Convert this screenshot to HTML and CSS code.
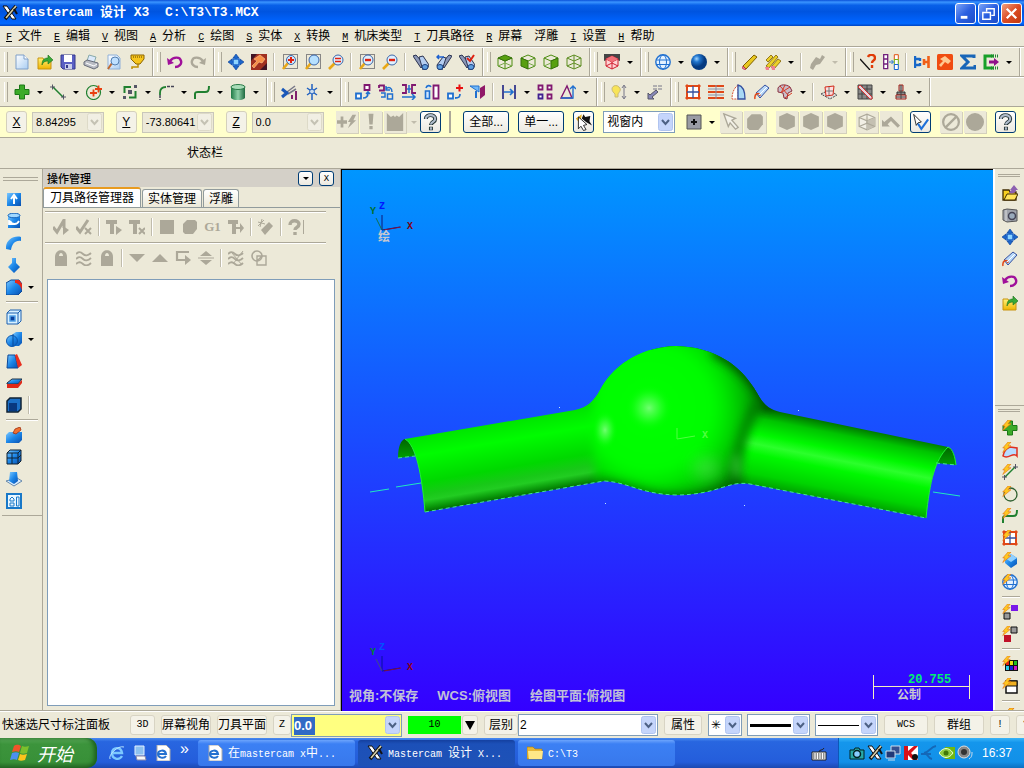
FILE: index.html
```html
<!DOCTYPE html>
<html lang="zh-CN">
<head>
<meta charset="utf-8">
<title>Mastercam 设计 X3</title>
<link rel="stylesheet" href="styles.css">
</head>
<body>
<svg class="sprite" aria-hidden="true">
<defs>
<linearGradient id="gy" x2="0" y2="1"><stop stop-color="#fff27a"/><stop offset="1" stop-color="#f0b400"/></linearGradient>
<linearGradient id="gb" x2="1" y2="1"><stop stop-color="#7cc8ff"/><stop offset=".5" stop-color="#1b86e8"/><stop offset="1" stop-color="#0a4fae"/></linearGradient>
<linearGradient id="gg"><stop stop-color="#1f7a45"/><stop offset=".5" stop-color="#8fd0a8"/><stop offset="1" stop-color="#1f6a40"/></linearGradient>
<linearGradient id="gp" x2="1" y2="1"><stop stop-color="#fff"/><stop offset="1" stop-color="#a9cdf2"/></linearGradient>
<radialGradient id="gs" cx=".35" cy=".3"><stop stop-color="#9fd4ff"/><stop offset=".4" stop-color="#2277cf"/><stop offset="1" stop-color="#053a80"/></radialGradient>
</defs>
<symbol id="new" viewBox="0 0 16 16"><path d="M2 1h8l4 4v10H2z" fill="url(#gp)" stroke="#7f9fc8"/><path d="M10 1v4h4" fill="#fff" stroke="#7f9fc8"/></symbol>
<symbol id="open" viewBox="0 0 16 16"><path d="M1 4h5l1 2h7v9H1z" fill="url(#gy)" stroke="#c89410"/><path d="M5 11c0-5 2-7 6-7V1l5 5-5 4V7c-3 0-5 1-6 4z" fill="#37a837" stroke="#1b6e1b" stroke-width=".6"/></symbol>
<symbol id="save" viewBox="0 0 16 16"><path d="M1 1h14v14H3l-2-2z" fill="#5a5fc4" stroke="#34388c"/><path d="M4 1h8v7H4z" fill="#fff"/><path d="M5 10h7v5H5z" fill="#c9cdea"/><path d="M6 11h2v3H6z" fill="#34388c"/></symbol>
<symbol id="print" viewBox="0 0 16 16"><path d="M6 1l7 2-2 6-7-2z" fill="#dbe9fb" stroke="#8aa"/><path d="M1 8l3-2 11 3v4l-4 2-10-4z" fill="#b9bcc4" stroke="#666b78"/><path d="M3 9l8 3 3-2" fill="none" stroke="#fff"/></symbol>
<symbol id="preview" viewBox="0 0 16 16"><path d="M2 1h9l3 3v11H2z" fill="url(#gp)" stroke="#8fb0d8"/><path d="M6 9l-4 6" stroke="#c06a30" stroke-width="2"/><circle cx="9" cy="7" r="4" fill="#bfe0ff" stroke="#5580b0"/></symbol>
<symbol id="funnel" viewBox="0 0 16 16"><path d="M9 9v4H3v2" fill="none" stroke="#c09000" stroke-width="1.500"/><path d="M2 1h13v4l-4 5H7L2 5z" fill="#f6c51c" stroke="#8c6400"/><path d="M4 3h10" stroke="#604000" stroke-dasharray="1 1"/></symbol>
<symbol id="undo" viewBox="0 0 16 16"><path d="M3 7c3-4 10-5 11 0 1 3-2 6-6 6" fill="none" stroke="#a0109a" stroke-width="2.400"/><path d="M0 4l1 7 6-2z" fill="#a0109a"/></symbol>
<symbol id="redo" viewBox="0 0 16 16"><path d="M13 7C10 3 3 2 2 7c-1 3 2 6 6 6" fill="none" stroke="#aca899" stroke-width="2.400"/><path d="M16 4l-1 7-6-2z" fill="#aca899"/></symbol>
<symbol id="pan" viewBox="0 0 16 16"><path d="M8 0l3 4H9v3h3V5l4 3-4 3V9H9v3h2l-3 4-3-4h2V9H4v2L0 8l4-3v2h3V4H5z" fill="#1c66cc" stroke="#0c3f94" stroke-width=".6"/><path d="M5 5h6v6H5z" fill="#8fd4ff" stroke="#1c66cc" stroke-width="1.500"/></symbol>
<symbol id="paint" viewBox="0 0 16 16"><path d="M0 0h16v16H0z" fill="#a03020"/><path d="M0 0h6L0 7zM16 9v7h-7z" fill="#401424"/><path d="M3 5l6-4 5 4-3 4-3-1-5 6-2-2 5-5z" fill="#f89048" stroke="#ffc890" stroke-width=".6"/></symbol>
<symbol id="zin" viewBox="0 0 16 16"><path d="M1.500 .5h14v14h-14z" fill="none" stroke="#223" stroke-dasharray="1 1"/><path d="M6 9l-5 6" stroke="#e8a818" stroke-width="2.600"/><circle cx="9" cy="6" r="4.500" fill="#cfe8ff" stroke="#3c66a8"/><path d="M6 6h6M9 3v6" stroke="#e02010" stroke-width="2"/></symbol>
<symbol id="zwin" viewBox="0 0 16 16"><path d="M1.500 .5h14v14h-14z" fill="none" stroke="#223" stroke-dasharray="1 1"/><path d="M6 9l-5 6" stroke="#e8a818" stroke-width="2.600"/><circle cx="9" cy="6" r="5" fill="#b6e0ff" stroke="#3c66a8"/></symbol>
<symbol id="zeq" viewBox="0 0 16 16"><path d="M7 9l-6 6" stroke="#e8a818" stroke-width="2.600"/><circle cx="10" cy="6" r="5" fill="#dff0ff" stroke="#3c66a8"/><path d="M7 4.500h6M7 7.500h6" stroke="#e02010" stroke-width="1.700"/></symbol>
<symbol id="zoutw" viewBox="0 0 16 16"><path d="M1.500 .5h14v14h-14z" fill="none" stroke="#223" stroke-dasharray="1 1"/><path d="M6 9l-5 6" stroke="#e8a818" stroke-width="2.600"/><circle cx="9" cy="6" r="5" fill="#dff0ff" stroke="#3c66a8"/><path d="M6 6h6" stroke="#e02010" stroke-width="2.400"/></symbol>
<symbol id="zout" viewBox="0 0 16 16"><path d="M7 9l-6 6" stroke="#e8a818" stroke-width="2.600"/><circle cx="10" cy="6" r="5" fill="#dff0ff" stroke="#3c66a8"/><path d="M7 6h6" stroke="#e02010" stroke-width="2.400"/></symbol>
<symbol id="bin" viewBox="0 0 16 16"><path d="M0 2l3-1 8 9-3 4z" fill="#8c98b8" stroke="#2b3350"/><path d="M6 3l4-1 6 9-2 4-4 1z" fill="#b4cdf0" stroke="#2b3350"/><ellipse cx="12" cy="13" rx="3" ry="2.500" fill="#5f9fe0" stroke="#1c4080"/></symbol>
<symbol id="bin2" viewBox="0 0 16 16"><path d="M16 2l-3-1-8 9 3 4z" fill="#8c98b8" stroke="#2b3350"/><path d="M10 4L7 3l-6 8 1 4 4 1z" fill="#b4cdf0" stroke="#2b3350"/><path d="M8 3H1M3 1L1 3l2 2" fill="none" stroke="#1c60d0" stroke-width="1.500"/><ellipse cx="4" cy="13" rx="3" ry="2.500" fill="#5f9fe0" stroke="#1c4080"/></symbol>
<symbol id="bin3" viewBox="0 0 16 16"><use href="#bin"/><path d="M8 4l3 3 4-6" fill="none" stroke="#e02010" stroke-width="2"/></symbol>
<symbol id="cubet" viewBox="0 0 16 16"><path d="M1 4l7 3 7-3v8l-7 3-7-3zM8 7v8" fill="none" stroke="#4c8c10"/><path d="M1 4l7-3 7 3-7 3z" fill="#58a010" stroke="#35700a"/><path d="M1 12l7-3 7 3" fill="none" stroke="#78a848"/></symbol>
<symbol id="cubef" viewBox="0 0 16 16"><path d="M1 4l7-3 7 3-7 3zM15 4v8l-7 3" fill="none" stroke="#4c8c10"/><path d="M1 4l7 3v8l-7-3z" fill="#58a010" stroke="#35700a"/><path d="M8 9l7 3" stroke="#78a848"/></symbol>
<symbol id="cuber" viewBox="0 0 16 16"><path d="M1 4l7-3 7 3-7 3zM1 4v8l7 3" fill="none" stroke="#4c8c10"/><path d="M15 4L8 7v8l7-3z" fill="#58a010" stroke="#35700a"/><path d="M8 9l-7 3" stroke="#78a848"/></symbol>
<symbol id="cubei" viewBox="0 0 16 16"><path d="M1 4l7-3 7 3-7 3zM1 4v8l7 3 7-3V4M8 1v14M1 12l7-3 7 3" fill="none" stroke="#5c8c20"/></symbol>
<symbol id="cubered" viewBox="0 0 16 16"><path d="M0 0h16v7l-8-3-8 3z" fill="#444"/><path d="M2 5l6-3 6 3v7l-6 3-6-3z" fill="#ffd4d4" stroke="#d02030"/><path d="M2 5l6 3 6-3M8 8v7M2 12l6-3 6 3" fill="none" stroke="#d02030"/><path d="M2 5l6-3 6 3-6 3z" fill="#f07078"/></symbol>
<symbol id="globe" viewBox="0 0 16 16"><circle cx="8" cy="8" r="7.200" fill="#e4f2ff" stroke="#2070d0" stroke-width="1.400"/><ellipse cx="8" cy="8" rx="3.500" ry="7" fill="none" stroke="#2070d0"/><path d="M1 6h14M1 10.500h14" stroke="#2070d0"/></symbol>
<symbol id="ball" viewBox="0 0 16 16"><circle cx="8" cy="8" r="8" fill="url(#gs)"/></symbol>
<symbol id="pencil" viewBox="0 0 16 16"><path d="M1 12L12 1l3 2L4 15z" fill="#e8c820" stroke="#806000"/><path d="M1 12l3 3-1 1-3-2z" fill="#f08090" stroke="#a02030" stroke-width=".6"/></symbol>
<symbol id="pencils" viewBox="0 0 16 16"><path d="M1 6l5-5 2 2-5 5zM1 12L11 1l2 2L4 14zM6 13l7-8 3 2-7 8z" fill="#ecd028" stroke="#806000" stroke-width=".8"/><path d="M0 13h4v3H1zM6 12h4v4H7z" fill="#f08090"/></symbol>
<symbol id="gpen" viewBox="0 0 16 16"><path d="M1 14l1-4 5-7 4 2 2-4 3 2-5 7-4 1-3 5z" fill="#aca899"/></symbol>
<symbol id="lineq" viewBox="0 0 16 16"><path d="M0 5l10 11" stroke="#111" stroke-width="1.300"/><path d="M8 3c1-3 7-3 7 1 0 3-3 2-3 5M12 11v3" fill="none" stroke="#e03c08" stroke-width="2.400"/></symbol>
<symbol id="tbl" viewBox="0 0 16 16"><path d="M.7.700h4v14h-4zM1 5h4M1 10h4" fill="#fff" stroke="#70207c" stroke-width="1.300"/><path d="M11.300.700h4v5h-4z" fill="#fff" stroke="#e05010"/><path d="M11.300 5.500h4v5h-4z" fill="#fff" stroke="#70b010"/><path d="M11.300 10.500h4v5h-4z" fill="#fff" stroke="#1060d0"/><path d="M6 8h4M8.500 6l2 2-2 2" fill="none" stroke="#2070d0"/></symbol>
<symbol id="plug" viewBox="0 0 16 16"><path d="M1 2v12M1 5h5M1 11h5M6 4v3M6 9v3" stroke="#1868c8" stroke-width="2.400"/><path d="M14.500 2v12M14 8h-4M10 5v6" stroke="#f06018" stroke-width="2.600"/></symbol>
<symbol id="orsq" viewBox="0 0 16 16"><rect width="16" height="16" rx="1.500" fill="#f04c10"/><path d="M3 5l5-3 6 5-3 3-3-2-4 5-2-2 4-4z" fill="#ffc890"/></symbol>
<symbol id="sigma" viewBox="0 0 16 16"><path d="M14 4V2H2l6 6-6 6h13v-3" fill="none" stroke="#1866b8" stroke-width="3"/></symbol>
<symbol id="exp" viewBox="0 0 16 16"><path d="M11 2H2v12h9" fill="none" stroke="#18a028" stroke-width="3"/><path d="M8 2h8M8 14h8" stroke="#208830" stroke-width="3" stroke-dasharray="1 1"/><path d="M6 8h6" stroke="#90108a" stroke-width="3"/><path d="M11 4l5 4-5 4z" fill="#90108a"/></symbol>
<symbol id="plus" viewBox="0 0 16 16"><path d="M5.500 1h5v4.500H15v5h-4.500V15h-5v-4.500H1v-5h4.500z" fill="#3cab28" stroke="#1c7818"/></symbol>
<symbol id="line" viewBox="0 0 16 16"><path d="M3 3l10 10" stroke="#208030" stroke-width="1.500"/><path d="M0 3h5M2.500.500v5M11 13h5M13.500 10.500v5" stroke="#556"/></symbol>
<symbol id="circ" viewBox="0 0 16 16"><circle cx="7.500" cy="8.500" r="7" fill="none" stroke="#208030" stroke-width="1.200"/><path d="M4 9h7M7.500 5.500v7M9 5h7M12.500 1.500v7" stroke="#e84010" stroke-width="1.800"/></symbol>
<symbol id="rect" viewBox="0 0 16 16"><path d="M9 3H2.500v6M7 13.500h6.500V7" fill="none" stroke="#208030" stroke-width="2"/><path d="M12 1h3v3h-3zM1 12h3v3H1zM6 6h4v4H6z" fill="#556"/></symbol>
<symbol id="arc" viewBox="0 0 16 16"><path d="M2 11V9c0-4 2-6 6-6" fill="none" stroke="#208030" stroke-width="1.800"/><path d="M9 2.500h7M2 11v5" stroke="#445" stroke-width="1.500" stroke-dasharray="3 1"/></symbol>
<symbol id="spl" viewBox="0 0 16 16"><path d="M1 15V10c0-2 1-2 3-2h7c3 0 4-1 4-6" fill="none" stroke="#208030" stroke-width="2"/></symbol>
<symbol id="cyl" viewBox="0 0 16 16"><path d="M1 3v11c3 3 11 3 14 0V3z" fill="url(#gg)"/><ellipse cx="8" cy="3" rx="7" ry="2.500" fill="#a8dcb8" stroke="#2a7a48"/></symbol>
<symbol id="trim" viewBox="0 0 16 16"><path d="M6 8l8-6M7 10l8-5" stroke="#778" stroke-width="1.500"/><path d="M1 5l6 5M1 13l6-5" stroke="#1a58b8" stroke-width="3"/><path d="M15 7v9M11 15v-4" fill="none" stroke="#80206c" stroke-width="2"/></symbol>
<symbol id="brk" viewBox="0 0 16 16"><path d="M8 0v16M3 4l10 7M13 4L3 11" stroke="#2060c0" stroke-width="1.500"/><circle cx="8" cy="7.500" r="2.400" fill="#cde" stroke="#2060c0"/></symbol>
<symbol id="x1" viewBox="0 0 16 16"><path d="M9.500 1h5v5h-5z" fill="#fff" stroke="#801870" stroke-width="1.800"/><path d="M1 9.500h5v5H1z" fill="#fff" stroke="#2070d0" stroke-width="1.800"/><path d="M8 14c4 0 5-2 5-5M11 10l2-2 2 2" fill="none" stroke="#2070d0" stroke-width="1.600"/></symbol>
<symbol id="x2" viewBox="0 0 16 16"><path d="M1 1.500h5v5H1M1 1v3" fill="none" stroke="#801870" stroke-width="1.800"/><path d="M8 5c3-3 6-1 6 3M8 2v4h4M3 9h4v4H3M9.500 10h5v5h-5z" fill="none" stroke="#2070d0" stroke-width="1.500"/></symbol>
<symbol id="x3" viewBox="0 0 16 16"><path d="M1 1h4v8H1M15 1h-4v8h4" fill="none" stroke="#801870" stroke-width="1.800"/><path d="M8 1v8M6 5h4M1 13h13M11 10l3 3-3 3" fill="none" stroke="#2070d0" stroke-width="1.500"/></symbol>
<symbol id="x4" viewBox="0 0 16 16"><path d="M9.500 1.500h5v13h-5z" fill="#fff" stroke="#801870" stroke-width="1.800"/><path d="M1.500 7h4v7.500h-4zM2 4c1-3 4-3 5-1" fill="#cfe6ff" stroke="#2070d0" stroke-width="1.600"/></symbol>
<symbol id="x5" viewBox="0 0 16 16"><path d="M1 9.500h5v5H1z" fill="#fff" stroke="#2070d0" stroke-width="1.800"/><path d="M8 14c4 0 5-1 5-4" fill="none" stroke="#2070d0" stroke-width="1.800"/><path d="M9 4h7M12.500.500v7" stroke="#e81010" stroke-width="2"/></symbol>
<symbol id="x6" viewBox="0 0 16 16"><path d="M0 2h9v6z" fill="#70b8f8" stroke="#2070d0"/><path d="M6 7v7" stroke="#2070d0" stroke-width="2"/><path d="M10 4l5-3v10l-5 4z" fill="#901868"/></symbol>
<symbol id="x7" viewBox="0 0 16 16"><path d="M2 1v14M14 1v14" stroke="#34388c" stroke-width="1.800"/><path d="M3 8h9M9 5l3 3-3 3" fill="none" stroke="#2070d0" stroke-width="1.700"/></symbol>
<symbol id="x8" viewBox="0 0 16 16"><path d="M1.500 1.500h4v4h-4zM10.500 1.500h4v4h-4zM10.500 10.500h4v4h-4z" fill="#fff" stroke="#801870" stroke-width="1.800"/><path d="M1.500 10.500h4v4h-4z" fill="#fff" stroke="#402090" stroke-width="1.800"/></symbol>
<symbol id="x9" viewBox="0 0 16 16"><path d="M1 14L7 2l5 12z" fill="none" stroke="#801870" stroke-width="1.400"/><path d="M1 14h12V3M10 5l3-3 3 3" fill="none" stroke="#2070d0" stroke-width="1.400"/></symbol>
<symbol id="bulb" viewBox="0 0 16 16"><path d="M4 10c-7-6 0-11 4-7 3 3 0 5-1 7v3H4z" fill="#f8e458" stroke="#c8b878"/><path d="M13 2v12M11 4l2-3 2 3M11 12l2 3 2-3" fill="none" stroke="#778"/></symbol>
<symbol id="stair" viewBox="0 0 16 16"><path d="M6 2h10M6 5h10" stroke="#778" stroke-dasharray="4 1"/><path d="M1 15V9l2 2 6-5 2 2-6 5 2 2z" fill="#8888b8" stroke="#556"/></symbol>
<symbol id="sgrid" viewBox="0 0 16 16"><path d="M2 2h12v12H2z" fill="#fff" stroke="#e04818" stroke-width="2"/><path d="M8 2v12M2 8h12" stroke="#3450a0" stroke-width="1.300"/><path d="M0 2h4M2 0v4M12 2h4M14 0v4M0 14h4M2 12v4M12 14h4M14 12v4" stroke="#e04818"/></symbol>
<symbol id="srule" viewBox="0 0 16 16"><path d="M0 2h16M0 8h16M0 14h16" stroke="#e04818" stroke-width="1.800"/><path d="M0 5h16M0 11h16M8 1v14" stroke="#8890a8"/></symbol>
<symbol id="srev" viewBox="0 0 16 16"><path d="M7 1C3 4 1 9 1 15h6z" fill="#fff" stroke="#d85030" stroke-dasharray="2 1"/><path d="M7 1c5 1 7 7 7 14H7z" fill="#a8d8f4" stroke="#3450a0" stroke-width="1.300"/></symbol>
<symbol id="sswp" viewBox="0 0 16 16"><path d="M2 9l9-8 4 3-9 10z" fill="#b8d8f8" stroke="#3450a0"/><path d="M1 15c-1-5 4-8 5-3" fill="none" stroke="#e04818" stroke-width="1.500"/><path d="M5 11l8-8" stroke="#fff"/></symbol>
<symbol id="smsh" viewBox="0 0 16 16"><path d="M1 4c2-4 8-4 12-1l2 4-4 2-1 6-3-1-1-5-5-1z" fill="#c8bcc8" stroke="#883040"/><path d="M3 2l9 10M8 1l-4 8M13 3L5 8M8 14l7-5" stroke="#d83820"/></symbol>
<symbol id="solp" viewBox="0 0 16 16"><path d="M0 10l8-4 8 5-7 4z" fill="#ddd" stroke="#444" stroke-dasharray="2 1"/><path d="M4 3l9-1-1 9-7 1z" fill="#fdd" stroke="#d02818"/><path d="M8 3v8M5 7h7" stroke="#777"/></symbol>
<symbol id="mill" viewBox="0 0 16 16"><path d="M1 1h14v14H1z" fill="#888" stroke="#444"/><path d="M1 5h14M1 10h14M5 1v14M10 1v14" stroke="#444"/><path d="M1 3l12 12h2v-2L3 1z" fill="#e8d4dc" stroke="#d03030"/></symbol>
<symbol id="tool" viewBox="0 0 16 16"><path d="M6 1h4v6H6z" fill="#bbb" stroke="#a02018"/><path d="M4 8h8v3H4z" fill="#888" stroke="#333"/><path d="M3 11h10v4H3z" fill="#dcc" stroke="#a02018"/><path d="M3 13h10M8 1v14" stroke="#444"/></symbol>
<symbol id="gsq" viewBox="0 0 16 16"><path d="M1 1h14v14H1z" fill="#aca899"/></symbol>
<symbol id="ghex" viewBox="0 0 16 16"><path d="M5 1h8l2 2v7l-4 5H3l-2-2V5z" fill="#aca899"/></symbol>
<symbol id="goct" viewBox="0 0 16 16"><path d="M8 0l7 3v9l-7 3-7-3V3z" fill="#aca899"/></symbol>
<symbol id="gdisc" viewBox="0 0 22 22"><circle cx="11" cy="11" r="11" fill="#aca899"/></symbol>
<symbol id="gbolt" viewBox="0 0 22 16"><path d="M0 6h4V2h3v4h4v4H7v4H4v-4H0zM17 0h4l-3 6h3l-9 9 3-7h-3z" fill="#aca899"/></symbol>
<symbol id="gexc" viewBox="0 0 16 22"><path d="M5 1h6l-1 13H6zM6 16h4v4H6z" fill="#aca899"/></symbol>
<symbol id="gcat" viewBox="0 0 22 22"><path d="M1 0l5 5 3-2 2 2 2-2 3 2 5-5v22H1z" fill="#aca899"/></symbol>
<symbol id="garr" viewBox="0 0 20 20"><path d="M2 1l13 5-4 2 7 8-3 2-6-7-2 4z" fill="#f4f2e8" stroke="#aca899" stroke-width="1.500"/></symbol>
<symbol id="gcube" viewBox="0 0 16 16"><path d="M1 4l7-3 7 3v8l-7 3-7-3zM1 4l7 3 7-3M8 7v8" fill="#f2f0e6" stroke="#aca899"/><path d="M8 7l7-3v8l-7 3z" fill="#c4c0b2"/><path d="M1 12l7-3 7 3M8 1v8" fill="none" stroke="#aca899"/></symbol>
<symbol id="ghook" viewBox="0 0 16 16"><path d="M0 12V6l2 2 6-5 8 8-2 2-6-6-3 3 2 2z" fill="#aca899"/></symbol>
<symbol id="gno" viewBox="0 0 16 16"><circle cx="8" cy="8" r="7" fill="none" stroke="#aca899" stroke-width="2"/><path d="M3 13L13 3" stroke="#aca899" stroke-width="2"/></symbol>
<symbol id="help" viewBox="0 -1 17 21"><path d="M3 6c0-6 11-6 11 0 0 4-5 3-5 7M9 15v4" fill="none" stroke="#233" stroke-width="4.600"/><path d="M3 6c0-6 11-6 11 0 0 4-5 3-5 6.500M9 15.500v3" fill="none" stroke="#b0bccc" stroke-width="2.400"/></symbol>
<symbol id="mcur" viewBox="0 0 20 20"><path d="M8 6l2-5 2 3 6-1-1 6 3 5-7-4z" fill="#111"/><path d="M1 6l7-5-1 6-2 4z" fill="#e8b020"/><path d="M4 4l10 9-4 1 3 5-3 1-3-5-3 3z" fill="#fff" stroke="#111"/></symbol>
<symbol id="vcur" viewBox="0 0 20 20"><path d="M2 1l9 9-4 1-2 3z" fill="#fff" stroke="#111"/><path d="M7 12l4 6 8-11" fill="none" stroke="#2070d8" stroke-width="2.500"/></symbol>
<symbol id="gplus" viewBox="0 0 16 16"><path d="M1 1h14v14H1z" fill="#9a9ca4" stroke="#555"/><path d="M5 8h6M8 5v6" stroke="#111" stroke-width="2"/></symbol>
<symbol id="gchk" viewBox="0 0 16 16"><path d="M0 8l4 5L11 1v8" fill="none" stroke="#aca899" stroke-width="3"/><path d="M10 7l6 4-6 5z" fill="#aca899"/></symbol>
<symbol id="gchx" viewBox="0 0 16 16"><path d="M0 8l4 5L12 1" fill="none" stroke="#aca899" stroke-width="3"/><path d="M9 9l6 6M15 9l-6 6" stroke="#aca899" stroke-width="2"/></symbol>
<symbol id="gt" viewBox="0 0 16 16"><path d="M0 1h11v4H8v10H4V5H0z" fill="#aca899"/><path d="M10 7l6 4-6 5z" fill="#aca899"/></symbol>
<symbol id="gtx" viewBox="0 0 16 16"><path d="M0 1h11v4H8v10H4V5H0z" fill="#aca899"/><path d="M10 9l6 6M16 9l-6 6" stroke="#aca899" stroke-width="2"/></symbol>
<symbol id="gta" viewBox="0 0 16 16"><path d="M0 1h10v4H8v10H4V5H0z" fill="#aca899"/><path d="M8 8h4V4l4 5-4 5v-4H8z" fill="#aca899"/></symbol>
<symbol id="gtool" viewBox="0 0 16 16"><path d="M3 11l8-8 4 4-8 9z" fill="#aca899"/><path d="M0 3l7 2M4 0L2 8M0 7l6-6" stroke="#aca899"/></symbol>
<symbol id="gq" viewBox="0 0 16 16"><path d="M2 6c0-6 9-5 9-1 0 4-4 3-4 6M7 13v3" fill="none" stroke="#aca899" stroke-width="3.400"/><path d="M15.500 1v14" stroke="#aca899"/></symbol>
<symbol id="glock" viewBox="0 0 16 16"><path d="M2 7c0-9 12-9 12 0v9H2z" fill="#aca899"/><path d="M6 6c0-4 4-4 4 0z" fill="#ece9d8"/></symbol>
<symbol id="gwav" viewBox="0 0 16 16"><path d="M0 4c3-3 5-2 7 0s5 2 8-1M0 9c3-3 5-2 7 0s5 2 8-1M0 14c3-3 5-2 7 0s5 2 8-1" fill="none" stroke="#aca899" stroke-width="1.800"/></symbol>
<symbol id="gdn" viewBox="0 0 16 16"><path d="M0 4h16l-8 8z" fill="#aca899"/></symbol>
<symbol id="gup" viewBox="0 0 16 16"><path d="M0 12h16L8 4z" fill="#aca899"/></symbol>
<symbol id="gret" viewBox="0 0 16 16"><path d="M14 2H2v8h9" fill="none" stroke="#aca899" stroke-width="2.200"/><path d="M10 5l6 5-6 5z" fill="#aca899"/></symbol>
<symbol id="gud" viewBox="0 0 16 16"><path d="M2 6l6-5 6 5zM2 10l6 5 6-5zM0 7.500h16v1H0z" fill="#aca899"/></symbol>
<symbol id="gwx" viewBox="0 0 16 16"><use href="#gwav"/><path d="M4 3l10 12M15 1L5 14" stroke="#aca899"/></symbol>
<symbol id="gcs" viewBox="0 0 16 16"><circle cx="6" cy="6" r="5" fill="none" stroke="#aca899" stroke-width="1.600"/><path d="M6 6h9v9H6zM6 11l5-5" fill="none" stroke="#aca899" stroke-width="1.400"/></symbol>
<symbol id="sext" viewBox="0 0 16 16"><path d="M1 2h14v13H1z" fill="url(#gb)"/><path d="M8 13V6M5 8l3-4 3 4" fill="none" stroke="#fff" stroke-width="2"/></symbol>
<symbol id="srvl" viewBox="0 0 16 16"><path d="M2 2h12v13H2z" fill="url(#gb)"/><ellipse cx="8" cy="2.500" rx="6" ry="2.300" fill="#a0d8ff" stroke="#1060b8"/><path d="M4 8c2 4 7 4 9 0M3 7v4h4" fill="none" stroke="#fff" stroke-width="1.800"/></symbol>
<symbol id="sarc" viewBox="0 0 16 16"><path d="M0 14C-1 6 7 0 15 2v4c-6-1-9 3-10 9z" fill="url(#gb)"/></symbol>
<symbol id="sdn" viewBox="0 0 16 16"><path d="M6 1h4v5l4 4-6 6-6-6 4-4z" fill="url(#gb)"/></symbol>
<symbol id="sfil" viewBox="0 0 16 16"><path d="M0 4l5-3h8l3 4v7l-4 4H0z" fill="url(#gb)" stroke="#0c4898"/><path d="M9 1h4l3 4v6c-2-5-4-7-7-7z" fill="#e82818"/></symbol>
<symbol id="sshl" viewBox="0 0 16 16"><path d="M1 4l3-3h11v11l-3 3H1z" fill="#d8f0ff" stroke="#1c60b0"/><path d="M1 4h11v11M12 4l3-3" fill="none" stroke="#1c60b0"/><path d="M4 7h5v5H4z" fill="#0a3f9c" stroke="#4fa0e8" stroke-width="1.500"/></symbol>
<symbol id="sboo" viewBox="0 0 16 16"><path d="M7 3l3-2h6v11l-3 3H7z" fill="url(#gb)"/><circle cx="6" cy="10" r="5.500" fill="url(#gb)" stroke="#0c58b0"/><path d="M7 3v12" stroke="#084a9a"/></symbol>
<symbol id="sdrf" viewBox="0 0 16 16"><path d="M2 2h7l3 13H1z" fill="url(#gb)" stroke="#0c4898"/><path d="M9 2l2-1 5 11-4 3z" fill="#e83020"/></symbol>
<symbol id="sthk" viewBox="0 0 16 16"><path d="M1 8l5-4h10l-4 5H1z" fill="url(#gb)" stroke="#234"/><path d="M1 9h11l4-4v3l-4 5H1z" fill="#e02818"/></symbol>
<symbol id="sbox" viewBox="0 0 16 16"><path d="M1 4l3-3h11v11l-3 3H1z" fill="#1b70c8" stroke="#123" stroke-width="1.500"/><path d="M3 6h8v8H3z" fill="#083880"/></symbol>
<symbol id="simp" viewBox="0 0 16 16"><path d="M0 8l3-3h13v8l-3 3H0z" fill="url(#gb)"/><path d="M7 6l2-4 5-2 1 3-5 4z" fill="#f07030" stroke="#a03010" stroke-width=".8"/></symbol>
<symbol id="sgrd" viewBox="0 0 16 16"><path d="M1 4l3-3h11v11l-3 3H1z" fill="url(#gb)" stroke="#123"/><path d="M1 9h11l3-3M6 4v11M1 4h11v11M12 4l3-3" fill="none" stroke="#123"/></symbol>
<symbol id="sprj" viewBox="0 0 16 16"><path d="M0 10l8 5 8-5-5-3z" fill="#d8ecff" stroke="#68a"/><path d="M4 1h7l1 9-4 3-5-3z" fill="url(#gb)"/></symbol>
<symbol id="slay" viewBox="0 0 16 16"><path d="M1 1h14v14H1z" fill="#e8f6ff" stroke="#1878c8" stroke-width="2"/><path d="M4 8V6l2-2 2 2v2zM4 10h4v3H4zM10.500 4H13v9h-2.500z" fill="none" stroke="#1878c8"/></symbol>
<symbol id="ropn" viewBox="0 0 16 16"><path d="M1 5h6l1 2h6v8H1z" fill="#f8d020" stroke="#402c00" stroke-width="1.300"/><path d="M5 9h11l-3 6H2z" fill="#ffe45c" stroke="#402c00"/><path d="M7 8c1-2 2-3 3-3H8l4-5 4 5h-2c0 3-3 4-7 3z" fill="#8c60b0"/></symbol>
<symbol id="rcam" viewBox="0 0 16 16"><path d="M1 3l4-1 10 1v11L5 15l-4-2z" fill="#a0a4ac" stroke="#555"/><circle cx="10" cy="9" r="3.500" fill="#9ab" stroke="#445" stroke-width="1.500"/><path d="M4 3v11" stroke="#ddd"/></symbol>
<symbol id="bolt" viewBox="0 0 16 16"><path d="M8 0h4L8 5h4L1 14l3-6H1z" fill="#ffc820" stroke="#e07010" stroke-width=".8"/></symbol>
<symbol id="rplus" viewBox="0 0 16 16"><use href="#plus"/><use href="#bolt" width="12" height="12"/></symbol>
<symbol id="rsrf" viewBox="0 0 16 16"><path d="M1 14c1-5 4-8 7-9l7 1v8c-4-5-8 4-14 0z" fill="#b8dcff" stroke="#e03020" stroke-width="1.500"/><use href="#bolt" width="12" height="12"/></symbol>
<symbol id="rlin" viewBox="0 0 16 16"><path d="M3 13L13 3" stroke="#208030" stroke-width="1.500"/><path d="M0 13h5M2.500 11v5M11 3h5M13.500 0v5" stroke="#556"/><use href="#bolt" width="12" height="12"/></symbol>
<symbol id="rcir" viewBox="0 0 16 16"><circle cx="8.500" cy="8.500" r="6.500" fill="none" stroke="#306030" stroke-width="1.300"/><use href="#bolt" width="12" height="12"/></symbol>
<symbol id="rspl" viewBox="0 0 16 16"><use href="#spl"/><use href="#bolt" width="12" height="12"/></symbol>
<symbol id="rgrd" viewBox="0 0 16 16"><use href="#sgrid"/><use href="#bolt" width="12" height="12"/></symbol>
<symbol id="rcub" viewBox="0 0 16 16"><path d="M3 6l6-4 6 4v6l-6 4-6-5z" fill="url(#gb)"/><path d="M3 6l6-4 6 4-6 4z" fill="#90d0ff"/><use href="#bolt" width="12" height="12"/></symbol>
<symbol id="rglb" viewBox="0 0 16 16"><use href="#globe"/><use href="#bolt" width="12" height="12"/></symbol>
<symbol id="rc1" viewBox="0 0 16 16"><path d="M9 1h7v6H9z" fill="#7818e8"/><path d="M2 9h6v6H2z" fill="#999" stroke="#111"/><use href="#bolt" width="11" height="11"/></symbol>
<symbol id="rc2" viewBox="0 0 16 16"><path d="M9 1h6v6H9z" fill="#999" stroke="#111"/><path d="M2 9h7v7H2z" fill="#c01028"/><use href="#bolt" width="11" height="11"/></symbol>
<symbol id="rpal" viewBox="0 0 16 16"><path d="M3 4h13v11H3z" fill="#111"/><path d="M8 5h3v4H8z" fill="#e8e010"/><path d="M12 5h3v4h-3z" fill="#20c020"/><path d="M4 10h3v4H4z" fill="#20c8e8"/><path d="M8 10h3v4H8z" fill="#1820d8"/><path d="M12 10h3v4h-3z" fill="#d010c8"/><path d="M4 5h3v4H4z" fill="#e02010"/><use href="#bolt" width="11" height="11"/></symbol>
<symbol id="rwin" viewBox="0 0 16 16"><path d="M4 3h11v12H4z" fill="#fff" stroke="#111" stroke-width="1.500"/><path d="M4 3h11v5H4z" fill="#f0b020" stroke="#111"/><use href="#bolt" width="12" height="12"/></symbol>
<symbol id="logo" viewBox="0 0 16 16"><path d="M1 1h4l9 13h-4z" fill="#fff" stroke="#111"/><path d="M14 1L3 14" stroke="#111" stroke-width="3.500"/><path d="M14 1L4 13" stroke="#d8d0a8" stroke-width="1.600"/><path d="M12 4l3 5" stroke="#111" stroke-width="2"/></symbol>
<symbol id="flag" viewBox="0 0 20 20"><path d="M4 3c3-2 5-1 7 0L9 9C7 8 5 8 2 9z" fill="#f0542a"/><path d="M12 3c2 1 4 1 7 0l-2 7c-3 1-5 1-7 0z" fill="#7cc02c"/><path d="M2 10c3-1 5-1 7 0l-2 7c-2-1-4-1-7 0z" fill="#4c90f0"/><path d="M10 11c2 1 4 1 7 0l-2 6c-3 1-5 1-7 0z" fill="#fcc41c"/></symbol>
<symbol id="ie" viewBox="0 0 16 16"><path d="M13 11c-3 5-10 3-10-3s9-7 10 0H4" fill="none" stroke="#7cc8ff" stroke-width="2.400"/><path d="M1 14C-1 10 9 0 15 2" fill="none" stroke="#b8e4ff"/></symbol>
<symbol id="iepg" viewBox="0 0 16 16"><path d="M2 0h9l4 4v12H2z" fill="#fff" stroke="#aaa"/><path d="M11 11c-2 3-8 2-8-2s7-5 8 0H4" fill="none" stroke="#2470d0" stroke-width="2"/></symbol>
<symbol id="desk" viewBox="0 0 16 16"><path d="M3 1h9v9H3z" fill="#8cc0f0" stroke="#e4f0ff"/><path d="M4 11h9l1 4H5z" fill="#f8f8f8" stroke="#88a"/></symbol>
<symbol id="fold" viewBox="0 0 16 16"><path d="M0 2h6l2 2h7v10H0z" fill="#e8b838" stroke="#a87808" stroke-width=".6"/><path d="M1 6h15l-1 8H2z" fill="#ffe888"/></symbol>
<symbol id="kbd" viewBox="0 0 16 16"><path d="M1 6h14v8H1z" fill="#fff" stroke="#222"/><path d="M2 8h12M2 10h12M2 12h12" stroke="#222" stroke-dasharray="1.500 1"/><path d="M8 6c0-3 4-1 5-4" fill="none" stroke="#222"/></symbol>
<symbol id="tcam" viewBox="0 0 16 16"><path d="M1 5h4l1-2h4l1 2h4v9H1z" fill="#28a8a8" stroke="#022"/><circle cx="8" cy="9" r="3.500" fill="#8cf" stroke="#022" stroke-width="1.500"/></symbol>
<symbol id="tnet" viewBox="0 0 16 16"><path d="M6 1h9v8H6z" fill="#345090" stroke="#cde"/><path d="M1 6h9v7H1z" fill="#203878" stroke="#cde"/><path d="M3 15h7" stroke="#cde"/></symbol>
<symbol id="tkas" viewBox="0 0 16 16"><path d="M1 1h14v14H1z" fill="#fff"/><path d="M1 1h4v5l6-5h4L8 8l7 7h-5L5 10v5H1z" fill="#d81018"/><circle cx="12" cy="12" r="3" fill="#111"/></symbol>
<symbol id="tbird" viewBox="0 0 16 16"><path d="M15 1C9 2 9 7 3 8c4 0 3 5 8 6M0 9h10" fill="none" stroke="#1468b8" stroke-width="1.800"/></symbol>
<symbol id="tnv" viewBox="0 0 16 16"><path d="M6 2h10v12H6z" fill="#70b810"/><path d="M0 8c4-6 10-6 14 0-4 6-10 6-14 0z" fill="#90cc40" stroke="#e8ffd0"/><circle cx="7" cy="8" r="2.500" fill="#407808"/></symbol>
<symbol id="tvol" viewBox="0 0 16 16"><circle cx="7" cy="7" r="6" fill="#888" stroke="#ddd"/><circle cx="7" cy="7" r="3" fill="#333"/><path d="M12 14c3-2 3-4 3-7" fill="none" stroke="#cde"/></symbol>
</svg>

<header class="title"><svg class="ic"><use href="#logo"/></svg><h1>Mastercam 设计 X3&nbsp; C:\T3\T3.MCX</h1>
<div class="caps"><button aria-label="最小化"><svg viewBox="0 0 20 20"><path d="M5 14h7" stroke="#fff" stroke-width="3"/></svg></button><button aria-label="还原"><svg viewBox="0 0 20 20"><path d="M8 8V5h8v7h-3M4 9h8v7H4z" fill="none" stroke="#fff" stroke-width="1.500"/></svg></button><button class="close" aria-label="关闭"><svg viewBox="0 0 20 20"><path d="M5 5l10 10M15 5L5 15" stroke="#fff" stroke-width="2.400"/></svg></button></div></header>

<nav class="menu"><a href="#"><u>F</u>文件</a><a href="#"><u>E</u>编辑</a><a href="#"><u>V</u>视图</a><a href="#"><u>A</u>分析</a><a href="#"><u>C</u>绘图</a><a href="#"><u>S</u>实体</a><a href="#"><u>X</u>转换</a><a href="#"><u>M</u>机床类型</a><a href="#"><u>T</u>刀具路径</a><a href="#"><u>R</u>屏幕</a><a href="#">浮雕</a><a href="#"><u>I</u>设置</a><a href="#"><u>H</u>帮助</a></nav>

<div class="bar">
<div class="grp"><button class="b" aria-label="新建"><svg class="ic"><use href="#new"/></svg></button><button class="b" aria-label="打开"><svg class="ic"><use href="#open"/></svg></button><button class="b" aria-label="保存"><svg class="ic"><use href="#save"/></svg></button><button class="b" aria-label="打印"><svg class="ic"><use href="#print"/></svg></button><button class="b" aria-label="预览"><svg class="ic"><use href="#preview"/></svg></button><button class="b" aria-label="过滤"><svg class="ic"><use href="#funnel"/></svg></button></div>
<div class="grp"><button class="b" aria-label="撤销"><svg class="ic"><use href="#undo"/></svg></button><button class="b" aria-label="重做"><svg class="ic"><use href="#redo"/></svg></button></div>
<div class="grp"><button class="b" aria-label="平移"><svg class="ic"><use href="#pan"/></svg></button><button class="b" aria-label="重画"><svg class="ic"><use href="#paint"/></svg></button><i class="sep"></i><button class="b" aria-label="放大"><svg class="ic"><use href="#zin"/></svg></button><button class="b" aria-label="窗口缩放"><svg class="ic"><use href="#zwin"/></svg></button><button class="b" aria-label="适度"><svg class="ic"><use href="#zeq"/></svg></button><i class="sep"></i><button class="b" aria-label="缩小窗口"><svg class="ic"><use href="#zoutw"/></svg></button><button class="b" aria-label="缩小"><svg class="ic"><use href="#zout"/></svg></button><i class="sep"></i><button class="b" aria-label="动态"><svg class="ic"><use href="#bin"/></svg></button><button class="b" aria-label="前一视角"><svg class="ic"><use href="#bin2"/></svg></button><button class="b" aria-label="确定视角"><svg class="ic"><use href="#bin3"/></svg></button></div>
<div class="grp"><button class="b" aria-label="俯视"><svg class="ic"><use href="#cubet"/></svg></button><button class="b" aria-label="前视"><svg class="ic"><use href="#cubef"/></svg></button><button class="b" aria-label="右视"><svg class="ic"><use href="#cuber"/></svg></button><button class="b" aria-label="等角"><svg class="ic"><use href="#cubei"/></svg></button></div>
<div class="grp"><button class="b" aria-label="平面"><svg class="ic"><use href="#cubered"/></svg></button><button class="d" aria-label="平面选项"></button></div>
<div class="grp"><button class="b" aria-label="线框"><svg class="ic"><use href="#globe"/></svg></button><button class="d" aria-label="线框选项"></button><button class="b" aria-label="着色"><svg class="ic"><use href="#ball"/></svg></button><button class="d" aria-label="着色选项"></button></div>
<div class="grp"><button class="b" aria-label="删除"><svg class="ic"><use href="#pencil"/></svg></button><button class="b" aria-label="删除重复"><svg class="ic"><use href="#pencils"/></svg></button><button class="d" aria-label="删除选项"></button><i class="sep"></i><button class="b" aria-label="恢复" disabled><svg class="ic"><use href="#gpen"/></svg></button><button class="d off" aria-label="恢复选项" disabled></button></div>
<div class="grp"><button class="b" aria-label="分析"><svg class="ic"><use href="#lineq"/></svg></button><button class="b" aria-label="属性表"><svg class="ic"><use href="#tbl"/></svg></button><i class="sep"></i><button class="b" aria-label="连接"><svg class="ic"><use href="#plug"/></svg></button><button class="b" aria-label="颜色"><svg class="ic"><use href="#orsq"/></svg></button><button class="b" aria-label="统计"><svg class="ic"><use href="#sigma"/></svg></button><button class="b" aria-label="输出"><svg class="ic"><use href="#exp"/></svg></button><button class="d" aria-label="输出选项"></button></div>
</div>

<div class="bar">
<div class="grp"><button class="b" aria-label="点"><svg class="ic"><use href="#plus"/></svg></button><button class="d" aria-label="点选项"></button><button class="b" aria-label="直线"><svg class="ic"><use href="#line"/></svg></button><button class="d" aria-label="直线选项"></button><button class="b" aria-label="圆"><svg class="ic"><use href="#circ"/></svg></button><button class="d" aria-label="圆选项"></button><button class="b" aria-label="矩形"><svg class="ic"><use href="#rect"/></svg></button><button class="d" aria-label="矩形选项"></button><button class="b" aria-label="圆角"><svg class="ic"><use href="#arc"/></svg></button><button class="d" aria-label="圆角选项"></button><button class="b" aria-label="曲线"><svg class="ic"><use href="#spl"/></svg></button><button class="d" aria-label="曲线选项"></button><button class="b" aria-label="圆柱"><svg class="ic"><use href="#cyl"/></svg></button><button class="d" aria-label="圆柱选项"></button></div>
<div class="grp"><button class="b" aria-label="修剪"><svg class="ic"><use href="#trim"/></svg></button><button class="b" aria-label="打断"><svg class="ic"><use href="#brk"/></svg></button><button class="d" aria-label="打断选项"></button></div>
<div class="grp"><button class="b" aria-label="平移对象"><svg class="ic"><use href="#x1"/></svg></button><button class="b" aria-label="旋转平移"><svg class="ic"><use href="#x2"/></svg></button><button class="b" aria-label="镜像"><svg class="ic"><use href="#x3"/></svg></button><button class="b" aria-label="旋转"><svg class="ic"><use href="#x4"/></svg></button><button class="b" aria-label="比例"><svg class="ic"><use href="#x5"/></svg></button><button class="b" aria-label="投影"><svg class="ic"><use href="#x6"/></svg></button><i class="sep"></i><button class="b" aria-label="偏置"><svg class="ic"><use href="#x7"/></svg></button><button class="d" aria-label="偏置选项"></button><button class="b" aria-label="阵列"><svg class="ic"><use href="#x8"/></svg></button><button class="b" aria-label="拉伸"><svg class="ic"><use href="#x9"/></svg></button><button class="d" aria-label="拉伸选项"></button></div>
<div class="grp"><button class="b" aria-label="标注"><svg class="ic"><use href="#bulb"/></svg></button><button class="d" aria-label="标注选项"></button><button class="b" aria-label="注释"><svg class="ic"><use href="#stair"/></svg></button></div>
<div class="grp"><button class="b" aria-label="网格曲面"><svg class="ic"><use href="#sgrid"/></svg></button><button class="b" aria-label="直纹曲面"><svg class="ic"><use href="#srule"/></svg></button><button class="b" aria-label="旋转曲面"><svg class="ic"><use href="#srev"/></svg></button><button class="b" aria-label="扫描曲面"><svg class="ic"><use href="#sswp"/></svg></button><button class="b" aria-label="修剪曲面"><svg class="ic"><use href="#smsh"/></svg></button><button class="d" aria-label="曲面选项"></button><i class="sep"></i><button class="b" aria-label="刀路"><svg class="ic"><use href="#solp"/></svg></button><button class="d" aria-label="刀路选项"></button><button class="b" aria-label="加工"><svg class="ic"><use href="#mill"/></svg></button><button class="d" aria-label="加工选项"></button><button class="b" aria-label="刀具"><svg class="ic"><use href="#tool"/></svg></button><button class="d" aria-label="刀具选项"></button></div>
</div>

<div class="ribbon">
<div class="coord"><button class="k">X</button><label class="combo dim"><input aria-label="X 坐标" value="8.84295"></label></div>
<div class="coord"><button class="k">Y</button><label class="combo dim"><input aria-label="Y 坐标" value="-73.80641"></label></div>
<div class="coord"><button class="k">Z</button><label class="combo dim"><input aria-label="Z 坐标" value="0.0"></label></div>
<div class="set"><button class="f" aria-label="快速点" disabled><svg><use href="#gbolt"/></svg></button><button class="f" aria-label="提示" disabled><svg><use href="#gexc"/></svg></button><button class="f" aria-label="自动抓点" disabled><svg><use href="#gcat"/></svg></button><button class="d off" aria-label="抓点选项" disabled></button><button class="k xp" aria-label="抓点帮助"><svg><use href="#help"/></svg></button></div>
<div class="sel"><button class="xp wide">全部...</button><button class="xp wide">单一...</button><button class="k xp" aria-label="选择光标"><svg><use href="#mcur"/></svg></button><select class="combo win" aria-label="选取方式"><option>视窗内</option></select></div>
<div class="set"><button class="b" aria-label="增加"><svg class="ic"><use href="#gplus"/></svg></button><button class="d" aria-label="增加选项"></button><button class="f" aria-label="选择" disabled><svg><use href="#garr"/></svg></button><button class="f" aria-label="实体选择" disabled><svg><use href="#ghex"/></svg></button></div>
<div class="set"><button class="f" aria-label="选边" disabled><svg><use href="#goct"/></svg></button><button class="f" aria-label="选面" disabled><svg><use href="#goct"/></svg></button><button class="f" aria-label="选体" disabled><svg><use href="#goct"/></svg></button></div>
<div class="set"><button class="f" aria-label="背面" disabled><svg><use href="#gcube"/></svg></button><button class="f" aria-label="上一步" disabled><svg><use href="#ghook"/></svg></button></div>
<div class="set"><button class="k xp" aria-label="验证选择"><svg><use href="#vcur"/></svg></button></div>
<div class="set"><button class="f" aria-label="取消" disabled><svg><use href="#gno"/></svg></button><button class="f" aria-label="停止" disabled><svg><use href="#gdisc"/></svg></button></div>
<div class="set"><button class="k xp" aria-label="帮助"><svg><use href="#help"/></svg></button></div>
</div>
<div class="hint">状态栏</div>

<main>
<aside class="side left"><i class="hgrip"></i>
<button class="b" aria-label="挤出"><svg class="ic"><use href="#sext"/></svg></button><button class="b" aria-label="旋转实体"><svg class="ic"><use href="#srvl"/></svg></button><button class="b" aria-label="扫描实体"><svg class="ic"><use href="#sarc"/></svg></button><button class="b" aria-label="举升实体"><svg class="ic"><use href="#sdn"/></svg></button><div class="pair"><button class="b" aria-label="倒圆角"><svg class="ic"><use href="#sfil"/></svg></button><button class="d" aria-label="倒圆角选项"></button></div><i class="hsep"></i>
<button class="b" aria-label="抽壳"><svg class="ic"><use href="#sshl"/></svg></button><div class="pair"><button class="b" aria-label="布尔"><svg class="ic"><use href="#sboo"/></svg></button><button class="d" aria-label="布尔选项"></button></div><button class="b" aria-label="拔模"><svg class="ic"><use href="#sdrf"/></svg></button><button class="b" aria-label="加厚"><svg class="ic"><use href="#sthk"/></svg></button><div class="pair"><button class="b" aria-label="实体框"><svg class="ic"><use href="#sbox"/></svg></button><i class="sep"></i></div><i class="hsep"></i>
<button class="b" aria-label="去除面"><svg class="ic"><use href="#simp"/></svg></button><button class="b" aria-label="曲面转实体"><svg class="ic"><use href="#sgrd"/></svg></button><button class="b" aria-label="投影实体"><svg class="ic"><use href="#sprj"/></svg></button><button class="b" aria-label="三视图"><svg class="ic"><use href="#slay"/></svg></button><i class="hend"></i>
</aside>

<section class="panel">
<div class="phead"><h2>操作管理</h2><button class="xp" aria-label="菜单"><i class="tri"></i></button><button class="xp">X</button></div>
<div class="tabs" role="tablist"><button role="tab" class="on">刀具路径管理器</button><button role="tab">实体管理</button><button role="tab">浮雕</button></div>
<div class="pbody">
<div class="pbar"><button class="b" aria-label="全选"><svg class="ic"><use href="#gchk"/></svg></button><button class="b" aria-label="全不选"><svg class="ic"><use href="#gchx"/></svg></button><i class="sep"></i><button class="b" aria-label="重新计算"><svg class="ic"><use href="#gt"/></svg></button><button class="b" aria-label="清除计算"><svg class="ic"><use href="#gtx"/></svg></button><i class="sep"></i><button class="b" aria-label="模拟"><svg class="ic"><use href="#gsq"/></svg></button><button class="b" aria-label="验证"><svg class="ic"><use href="#ghex"/></svg></button><button class="b g1">G1</button><button class="b" aria-label="高速"><svg class="ic"><use href="#gta"/></svg></button><i class="sep"></i><button class="b" aria-label="删除操作"><svg class="ic"><use href="#gtool"/></svg></button><i class="sep"></i><button class="b" aria-label="帮助"><svg class="ic"><use href="#gq"/></svg></button></div>
<div class="pbar two"><button class="b" aria-label="锁定"><svg class="ic"><use href="#glock"/></svg></button><button class="b" aria-label="显示刀路"><svg class="ic"><use href="#gwav"/></svg></button><button class="b" aria-label="锁定后处理"><svg class="ic"><use href="#glock"/></svg></button><i class="sep"></i><button class="b" aria-label="下移"><svg class="ic"><use href="#gdn"/></svg></button><button class="b" aria-label="上移"><svg class="ic"><use href="#gup"/></svg></button><button class="b" aria-label="插入"><svg class="ic"><use href="#gret"/></svg></button><button class="b" aria-label="滚动"><svg class="ic"><use href="#gud"/></svg></button><i class="sep"></i><button class="b" aria-label="仅显示刀路"><svg class="ic"><use href="#gwx"/></svg></button><button class="b" aria-label="仅显示图形"><svg class="ic"><use href="#gcs"/></svg></button></div>
<div class="tree"></div>
</div>
</section>

<section class="view">
<svg class="scene" viewBox="342 170 651 541" preserveAspectRatio="xMidYMid meet">
<defs>
<linearGradient id="tl" gradientUnits="userSpaceOnUse" x1="500" y1="422" x2="513" y2="498"><stop stop-color="#00e400"/><stop offset=".25" stop-color="#00fc00"/><stop offset=".6" stop-color="#00d800"/><stop offset=".76" stop-color="#18c818"/><stop offset=".84" stop-color="#22cc22"/><stop offset=".93" stop-color="#0a980a"/><stop offset="1" stop-color="#006800"/></linearGradient>
<linearGradient id="tr" gradientUnits="userSpaceOnUse" x1="858" y1="427" x2="843" y2="503"><stop stop-color="#007000"/><stop offset=".14" stop-color="#00c400"/><stop offset=".34" stop-color="#00f800"/><stop offset=".47" stop-color="#2cff2c"/><stop offset=".6" stop-color="#00f800"/><stop offset=".85" stop-color="#00d400"/><stop offset="1" stop-color="#00a000"/></linearGradient>
<radialGradient id="sp" gradientUnits="userSpaceOnUse" cx="650" cy="408" r="128"><stop stop-color="#00ff00"/><stop offset=".48" stop-color="#00fc00"/><stop offset=".6" stop-color="#00e400"/><stop offset=".74" stop-color="#00b800"/><stop offset=".88" stop-color="#007800"/><stop offset="1" stop-color="#004400"/></radialGradient>
<radialGradient id="hl"><stop stop-color="#70ff70"/><stop offset=".4" stop-color="#50ff50" stop-opacity=".6"/><stop offset=".75" stop-color="#30ff30" stop-opacity=".15"/><stop offset="1" stop-color="#00ff00" stop-opacity="0"/></radialGradient>
<linearGradient id="dk" x2="0" y2="1"><stop stop-color="#006400"/><stop offset="1" stop-color="#00a000"/></linearGradient>
<filter id="s4" x="-1" y="-1" width="3" height="3"><feGaussianBlur stdDeviation="5"/></filter>
<filter id="s7" x="-1" y="-1" width="3" height="3"><feGaussianBlur stdDeviation="8"/></filter>
<clipPath id="body"><path d="M405 439L575 410C588 407 594 401 600 390C616 361 645 347 676 346C716 347 740 366 754 388C763 403 765 408 780 412L948 447C935 460 930 480 926 518L750 484C728 480 718 495 676 495C640 494 628 482 604 481L425 512C422 475 416 445 405 439z"/></clipPath>
</defs>
<path d="M398 458C398 446 401 440 405 439C411 443 413 448 415 456z" fill="url(#dk)"/>
<path d="M956 465C955 455 952 448 948 447C943 451 939 457 936 463z" fill="url(#dk)"/>
<g clip-path="url(#body)">
<path d="M390 330h260v200H390z" fill="url(#tl)"/>
<path d="M650 330h320v200H650z" fill="url(#tr)"/>
<path d="M604 340C630 310 745 325 768 395C754 420 740 445 740 485L735 505H606C588 480 588 410 604 340z" fill="url(#sp)" filter="url(#s4)"/>
<path d="M714 350C740 362 760 385 772 408" stroke="#003800" stroke-width="12" fill="none" opacity=".75" filter="url(#s4)"/>
<path d="M757 402C742 430 736 455 733 486" stroke="#006800" stroke-width="7" fill="none" opacity=".65" filter="url(#s4)"/>
<path d="M598 484C628 486 645 500 676 499C710 500 725 487 742 486" stroke="#006000" stroke-width="12" fill="none" opacity=".65" filter="url(#s4)"/>
<circle cx="649" cy="408" r="24" fill="url(#hl)"/>
<ellipse cx="605" cy="430" rx="13" ry="20" fill="url(#hl)"/>
<ellipse cx="706" cy="468" rx="13" ry="10" fill="#60e860" opacity=".55" filter="url(#s7)"/>
<ellipse cx="736" cy="466" rx="5" ry="12" fill="#50e850" opacity=".5" filter="url(#s4)"/>
</g>
<path d="M425 512L604 481C628 482 640 494 676 495C718 495 728 480 750 484L926 518M398 458l17-2M936 463l20 2" fill="none" stroke="#40e890" stroke-dasharray="4 3"/>
<path d="M926 518C930 480 935 460 948 447C953 449 955 457 956 465M405 439C416 445 422 475 425 512" fill="none" stroke="#20f030"/>
<path d="M370 492l19-3M396 487l25-4M933 492l27 4" stroke="#20e8c0"/>
<path d="M677 428v11l18-3" fill="none" stroke="#50ff40"/>
<path d="M559 407.500h1M605 503.500h1M744 505.500h1M798 410.500h1" stroke="#c0e8ff"/>
<g class="axis"><path d="M382 215v15l18-3" fill="none" stroke="#101878"/><path d="M382 230l-6-12" stroke="#107050"/><path d="M384 230l17-3" stroke="#801040"/><text x="379" y="209" fill="#0018ff">Z</text><text x="370" y="214" fill="#007030">Y</text><text x="407" y="229" fill="#800010">X</text><text class="hui" x="378" y="241" fill="#c8c8d0">绘</text></g>
<g class="axis"><path d="M382 656v15l18-3" fill="none" stroke="#0810a0"/><path d="M382 671l-6-12" stroke="#405080"/><path d="M384 671l17-3" stroke="#801040"/><text x="379" y="650" fill="#0050ff">Z</text><text x="370" y="655" fill="#008030">Y</text><text x="407" y="670" fill="#900010">X</text></g>
<text class="ax" x="702" y="438" fill="#50ff40">X</text>
<path d="M873.500 675v24M969.500 675v24M873 686.500h97" stroke="#f4f0c0"/>
<text class="meas" x="908" y="683" fill="#00f070">20.755</text><text class="unit" x="897" y="699" fill="#c8c8d0">公制</text>
</svg>
<div class="vinfo"><span>视角:不保存</span><span>WCS:俯视图</span><span>绘图平面:俯视图</span></div>
</section>

<aside class="side right"><div class="r1"><i class="hgrip"></i>
<button class="b" aria-label="打开文件"><svg class="ic"><use href="#ropn"/></svg></button><button class="b" aria-label="截图"><svg class="ic"><use href="#rcam"/></svg></button><button class="b" aria-label="平移视图"><svg class="ic"><use href="#pan"/></svg></button><button class="b" aria-label="扫描"><svg class="ic"><use href="#sswp"/></svg></button><button class="b" aria-label="撤销"><svg class="ic"><use href="#undo"/></svg></button><button class="b" aria-label="合并文件"><svg class="ic"><use href="#open"/></svg></button></div>
<div class="r2"><i class="hgrip"></i><button class="b" aria-label="仅点"><svg class="ic"><use href="#rplus"/></svg></button><button class="b" aria-label="仅曲面边界"><svg class="ic"><use href="#rsrf"/></svg></button><button class="b" aria-label="仅直线"><svg class="ic"><use href="#rlin"/></svg></button><button class="b" aria-label="仅圆弧"><svg class="ic"><use href="#rcir"/></svg></button><button class="b" aria-label="仅曲线"><svg class="ic"><use href="#rspl"/></svg></button><button class="b" aria-label="仅曲面"><svg class="ic"><use href="#rgrd"/></svg></button><button class="b" aria-label="仅实体"><svg class="ic"><use href="#rcub"/></svg></button><button class="b" aria-label="仅线框"><svg class="ic"><use href="#rglb"/></svg></button><i class="hsep"></i><button class="b" aria-label="按颜色"><svg class="ic"><use href="#rc1"/></svg></button><button class="b" aria-label="按层颜色"><svg class="ic"><use href="#rc2"/></svg></button><i class="hsep"></i><button class="b" aria-label="调色板"><svg class="ic"><use href="#rpal"/></svg></button><button class="b" aria-label="窗口"><svg class="ic"><use href="#rwin"/></svg></button><i class="hsep"></i><button class="b" aria-label="快速选取"><svg class="ic"><use href="#bolt"/></svg></button></div>
</aside>
</main>

<footer class="status"><span class="tip">快速选尺寸标注面板</span><button class="s w24"><b>3D</b></button><button class="s w50">屏幕视角</button><button class="s w50">刀具平面</button>
<div class="zf"><button class="s zb"><b>Z</b></button><label class="combo depth"><input aria-label="Z 深度" value="0.0"></label></div>
<div class="clr"><button class="green"><b>10</b></button><button class="s dn" aria-label="颜色选择"><i class="tri"></i></button></div>
<div class="lv"><button class="s lay">层别</button><select class="combo" aria-label="层别"><option>2</option></select></div>
<button class="s w38">属性</button><select class="combo star" aria-label="点型"><option>✳</option></select><select class="combo ln thin" aria-label="线型"><option label=" "></option></select><select class="combo ln" aria-label="线宽"><option label=" "></option></select><button class="s w44"><b>WCS</b></button><button class="s w50">群组</button><button class="s w20"><b>!</b></button><button class="s w20"><b>?</b></button></footer>

<footer class="task"><button class="start"><svg><use href="#flag"/></svg>开始</button>
<div class="quick"><button aria-label="浏览器"><svg class="ic"><use href="#ie"/></svg></button><button aria-label="桌面"><svg class="ic"><use href="#desk"/></svg></button><button aria-label="网页"><svg class="ic"><use href="#iepg"/></svg></button><span>»</span></div>
<div class="apps"><button><svg class="ic"><use href="#iepg"/></svg><span>在<b>mastercam x</b>中<b>...</b></span></button><button class="act"><svg class="ic"><use href="#logo"/></svg><span><b>Mastercam </b>设计<b> X...</b></span></button><button><svg class="ic"><use href="#fold"/></svg><span><b>C:\T3</b></span></button></div>
<svg class="ic kb"><use href="#kbd"/></svg>
<div class="tray"><svg class="ic"><use href="#tcam"/></svg><svg class="ic"><use href="#logo"/></svg><svg class="ic"><use href="#tnet"/></svg><svg class="ic"><use href="#tkas"/></svg><svg class="ic"><use href="#tbird"/></svg><svg class="ic"><use href="#tnv"/></svg><svg class="ic"><use href="#tvol"/></svg><time>16:37</time></div></footer>
</body>
</html>
```

FILE: styles.css
```css
* { box-sizing: border-box; }
body {
  margin: 0;
  height: 100vh;
  display: flex;
  flex-direction: column;
  overflow: hidden;
  background: #ece9d8;
  color: #000;
  font: 12px/16px "Liberation Sans", "Noto Sans CJK SC", sans-serif;
}
button, input, select { font: inherit; color: inherit; margin: 0; padding: 0; border: 0; background: none; }
button { display: flex; align-items: center; justify-content: center; flex: none; white-space: nowrap; }
.sprite { position: absolute; width: 0; height: 0; }
.ic { width: 16px; height: 16px; flex: none; display: block; }

.title {
  height: 26px;
  flex: none;
  display: flex;
  align-items: center;
  padding: 0 2px;
  gap: 4px;
  background: linear-gradient(#0a50d8, #3a94ff 8%, #0860e8 20%, #0054e0 45%, #0060f8 75%, #0068ff 90%, #0044c0);
}
.title h1 { margin: 0; flex: 1; color: #fff; font: bold 13px/20px "Liberation Mono", "Noto Sans CJK SC", monospace; white-space: pre; }
.caps { display: flex; gap: 2px; }
.caps button { width: 21px; height: 21px; border: 1px solid #fff; border-radius: 3px; background: linear-gradient(135deg, #7ca4f8, #2a5fe0 50%, #1c4cc8); }
.caps .close { background: linear-gradient(135deg, #f0a080, #dc4c24 50%, #c03810); }
.caps svg { width: 19px; height: 19px; }

.menu { height: 21px; flex: none; display: flex; align-items: center; border-bottom: 1px solid #aca899; }
.menu a { display: flex; align-items: baseline; gap: 6px; padding: 0 6px; color: #000; text-decoration: none; }
.menu u, b { font: 10px/12px "Liberation Mono", monospace; }

.bar { height: 30px; flex: none; display: flex; border-top: 1px solid #fff; border-bottom: 1px solid #aca899; }
.grp { position: relative; display: flex; align-items: center; padding: 0 4px 0 10px; border-right: 1px solid #aca899; box-shadow: 1px 0 #fff; }
.grp::before { content: ""; position: absolute; left: 4px; top: 4px; bottom: 4px; width: 2px; border-right: 1px solid #aca899; border-left: 1px solid #fff; }
.b { width: 23px; height: 22px; }
.d { width: 13px; height: 22px; }
.d::before, .tri { content: ""; border: 3px solid transparent; border-top-color: #000; border-bottom: 0; }
.d.off::before { border-top-color: #c0bcac; }
.sep { width: 2px; height: 18px; margin: 0 3px; border-left: 1px solid #c0bcac; border-right: 1px solid #fff; }

.ribbon { height: 31px; flex: none; display: flex; align-items: center; justify-content: space-between; padding: 0 8px 0 6px; background: #ffffcc; border-bottom: 1px solid #aca899; }
.coord, .set, .sel { display: flex; align-items: center; }
.coord { gap: 5px; margin-right: 4px; }
.k { width: 21px; height: 22px; border: 1px solid #d4d0bc; border-radius: 3px; background: #f4f2e8; text-decoration: underline; }
.k svg { width: 17px; height: 18px; }
.xp { border: 1px solid #003c74; border-radius: 3px; background: linear-gradient(#fff, #ece9e0); }
.wide { width: 46px; height: 22px; }
.combo { display: flex; height: 22px; border: 1px solid #7f9db9; appearance: none; background: #fff url("data:image/svg+xml,%3Csvg xmlns='http://www.w3.org/2000/svg' width='16' height='18'%3E%3Crect x='.5' y='.5' width='14' height='17' rx='2' fill='%23c5d5fb' stroke='%23b0c4f0'/%3E%3Cpath d='M4 7l3.500 4L11 7' fill='none' stroke='%234d6185' stroke-width='2'/%3E%3C/svg%3E") right center no-repeat; }
.combo input { width: 100%; min-width: 0; outline: 0; }
.dim { width: 72px; height: 21px; padding-left: 3px; border-color: #c9c7ba; background: #ece9d8 url("data:image/svg+xml,%3Csvg xmlns='http://www.w3.org/2000/svg' width='16' height='18'%3E%3Crect x='.5' y='.5' width='14' height='17' rx='2' fill='%23f1efe4' stroke='%23dddac8'/%3E%3Cpath d='M4 7l3.500 4L11 7' fill='none' stroke='%23c4c2b4' stroke-width='2'/%3E%3C/svg%3E") right center no-repeat; }
.dim input { font-size: 11px; margin-right: 12px; }
.win { width: 72px; padding-left: 3px; }
.f { width: 22px; height: 22px; margin: 0 1px; background: #ece9d8; box-shadow: 1px 1px #d4d0bc; }
.f svg { width: 20px; height: 18px; }
.set .f + .d { background: #ece9d8; }
.sel { gap: 9px; padding-left: 12px; border-left: 2px solid #aca899; }
.hint { height: 31px; flex: none; padding: 7px 0 0 187px; border-bottom: 1px solid #aca899; }

main { flex: 1; min-height: 0; display: flex; }
.side { flex: none; display: flex; flex-direction: column; overflow: hidden; }
.side .b { height: 22px; }
.left { width: 42px; padding: 8px 0 0 2px; }
.hgrip { height: 4px; margin: 0 4px 7px 1px; border-top: 1px solid #aca899; border-bottom: 1px solid #aca899; flex: none; }
.pair { display: flex; align-items: center; }
.pair .d { width: 12px; }
.hsep { height: 2px; margin: 3px 4px; border-top: 1px solid #aca899; border-bottom: 1px solid #fff; flex: none; }
.hend { height: 1px; margin-top: 3px; background: #aca899; flex: none; }
.right { width: 31px; border-left: 2px solid #fff; }
.r1, .r2 { display: flex; flex-direction: column; overflow: hidden; padding-left: 3px; }
.r1 { flex: 0 1 237px; padding-top: 5px; border-bottom: 1px solid #aca899; }
.r2 { flex: 1; padding-top: 3px; }
.right .b { width: 23px; }
.right .hgrip { height: 3px; margin: 0 4px 5px 0; }

.panel { width: 299px; flex: none; display: flex; flex-direction: column; border: 1px solid #aca899; border-top: 0; }
.phead { height: 18px; display: flex; align-items: center; gap: 6px; padding: 1px 6px 0 4px; background: #d4d0c8; flex: none; }
.phead h2 { margin: 0; flex: 1; font-size: 11px; line-height: 14px; font-weight: 500; }
.phead button { width: 15px; height: 15px; font: 9px/12px "Liberation Mono", monospace; }
.tabs { height: 20px; display: flex; align-items: flex-end; gap: 1px; flex: none; }
.tabs button { height: 18px; padding: 0 5px; border: 1px solid #919b9c; border-bottom: 0; border-radius: 3px 3px 0 0; background: linear-gradient(#fff, #ece9d8); }
.tabs .on { height: 20px; padding: 0 6px; border-top: 2px solid #e89b20; background: #fff; }
.pbody { flex: 1; min-height: 0; display: flex; flex-direction: column; padding: 3px 5px 4px 2px; border-top: 1px solid #919b9c; background: #ece9d8; }
.pbar { height: 31px; margin-right: 9px; padding-left: 4px; display: flex; align-items: center; border-top: 1px solid #aca899; box-shadow: inset 0 1px #fff; flex: none; }
.pbar.two { height: 37px; padding-bottom: 7px; }
.pbar .sep { margin: 0 2px 0 3px; }
.tree { flex: 1; margin-left: 2px; background: #fff; border: 1px solid #7f9db9; }
.g1 { color: #aca899; font: bold 13px/16px "Liberation Serif", serif; }

.view { position: relative; flex: 1; min-width: 0; display: flex; align-items: flex-end; border-left: 1px solid #000; border-top: 1px solid #000; background: linear-gradient(#0096ff, #3400ff); }
.scene { position: absolute; inset: 0; width: 100%; height: 100%; }
.scene .axis text, .ax { font: bold 10px "Liberation Mono", monospace; }
.scene .axis .hui, .unit { font: bold 12px "Noto Sans CJK SC", sans-serif; }
.meas { font: bold 12px "Liberation Mono", monospace; }
.vinfo { display: flex; gap: 19px; padding: 0 0 6px 7px; color: #c0c0d8; font: bold 13px/18px "Liberation Sans", "Noto Sans CJK SC", sans-serif; }

.status { height: 27px; flex: none; display: flex; align-items: center; gap: 6px; padding-left: 2px; overflow: hidden; border-top: 1px solid #fff; box-shadow: 0 -1px #aca899; }
.status > * { flex-shrink: 0; }
.tip { width: 122px; white-space: nowrap; }
.s { height: 20px; border: 1px solid #d8d4c4; border-radius: 3px; background: #f4f2e8; }
.w20 { width: 20px; }
.w24 { width: 25px; }
.w38 { width: 38px; }
.w44 { width: 44px; }
.w50 { width: 50px; }
.zf, .lv, .clr { display: flex; align-items: center; }
.zb { width: 18px; }
.depth { width: 111px; height: 23px; background-color: #ffff80; padding-left: 2px; }
.depth input { width: 21px; height: 18px; margin-top: 2px; background: #316ac5; color: #fff; font-weight: bold; font-size: 13px; }
.green { width: 53px; height: 18px; background: #00ff00; }
.dn { width: 16px; margin-left: 1px; }
.dn .tri { border-width: 9px 5px 0; }
.lv { flex: 1 0 174px; }
.lay { width: 34px; }
.lv select { flex: 1; padding-left: 1px; }
.star { width: 34px; padding-left: 2px; margin-right: -1px; }
.ln { width: 63px; background-image: linear-gradient(#000, #000), url("data:image/svg+xml,%3Csvg xmlns='http://www.w3.org/2000/svg' width='16' height='18'%3E%3Crect x='.5' y='.5' width='14' height='17' rx='2' fill='%23c5d5fb' stroke='%23b0c4f0'/%3E%3Cpath d='M4 7l3.500 4L11 7' fill='none' stroke='%234d6185' stroke-width='2'/%3E%3C/svg%3E"); background-position: 2px center, right center; background-size: 41px 1px, 16px 18px; }
.ln.thin { background-size: 41px 3px, 16px 18px; margin-right: -1px; }

.task { height: 30px; flex: none; display: flex; align-items: stretch; color: #fff; background: linear-gradient(#4a8cf0, #2866e0 12%, #245ddb 80%, #1c48b0); }
.start { width: 97px; gap: 7px; padding-right: 14px; border-radius: 0 10px 10px 0; background: linear-gradient(#5cac5c, #3c943c 20%, #389038 80%, #286c28); box-shadow: inset -3px 0 4px #1c601c; font: italic 18px/26px "Noto Sans CJK SC", sans-serif; }
.start svg { width: 20px; height: 20px; }
.quick { width: 101px; padding-left: 12px; display: flex; align-items: center; gap: 7px; flex: none; }
.quick span { font-size: 16px; padding: 0 0 8px 2px; }
.apps { flex: 1; display: flex; gap: 3px; min-width: 0; }
.apps button { flex: 0 1 157px; margin: 2px 0; padding: 0 9px; gap: 5px; justify-content: flex-start; border-radius: 3px; background: linear-gradient(#6ca4fc, #3c80f4 15%, #3878ec); overflow: hidden; }
.apps .act { background: linear-gradient(#1440a0, #1c50b8 15%, #1e52b7); }
.kb { margin: 8px 11px 0 0; }
.tray { flex: none; display: flex; align-items: center; gap: 2px; padding: 0 12px 0 10px; background: linear-gradient(#38b4f8, #1496ec 15%, #1290e8 80%, #0c70c0); border-left: 1px solid #0c58b8; }
.tray time { margin-left: 7px; }
```
